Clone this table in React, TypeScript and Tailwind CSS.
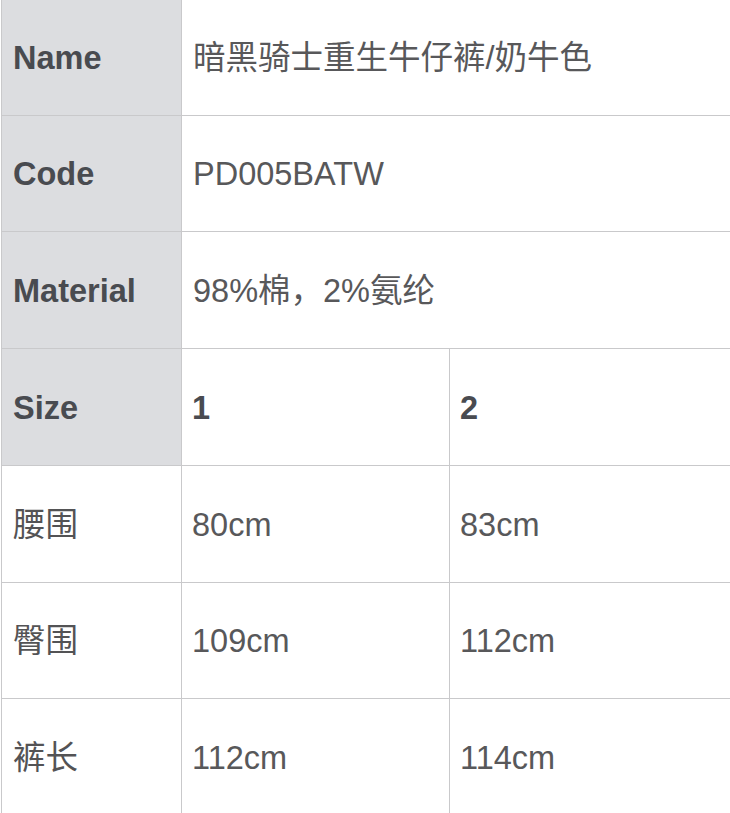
import React from "react";

const border = "border-[#c9c9cb]";

type Row = {
  label: string;
  labelGray: boolean;
  labelBold: boolean;
  cells: string[];
  bold?: boolean;
  h: string;
};

const rows: Row[] = [
  { label: "Name", labelGray: true, labelBold: true, cells: ["暗黑骑士重生牛仔裤/奶牛色"], h: "h-[116px]" },
  { label: "Code", labelGray: true, labelBold: true, cells: ["PD005BATW"], h: "h-[116px]" },
  { label: "Material", labelGray: true, labelBold: true, cells: ["98%棉，2%氨纶"], h: "h-[117px]" },
  { label: "Size", labelGray: true, labelBold: true, cells: ["1", "2"], bold: true, h: "h-[117px]" },
  { label: "腰围", labelGray: false, labelBold: false, cells: ["80cm", "83cm"], h: "h-[117px]" },
  { label: "臀围", labelGray: false, labelBold: false, cells: ["109cm", "112cm"], h: "h-[116px]" },
  { label: "裤长", labelGray: false, labelBold: false, cells: ["112cm", "114cm"], h: "h-[117px]" },
];

export default function App() {
  return (
    <div
      className="w-[730px] h-[813px] overflow-hidden bg-white"
      style={{ fontFamily: '"Liberation Sans", "Noto Sans CJK SC", sans-serif' }}
    >
      <div className={`ml-px border-l ${border} flex flex-col`}>
        {rows.map((r, i) => (
          <div
            key={i}
            className={`flex shrink-0 ${r.h} ${i < rows.length - 1 ? "border-b" : ""} ${border}`}
          >
            <div
              className={`w-[180px] shrink-0 flex items-center pl-[11px] pt-[2px] border-r ${border} ${
                r.labelGray ? "bg-[#dcdde0]" : "bg-white"
              } ${r.labelBold ? "font-bold text-[#494b50]" : "text-[#535355]"} text-[32.5px]`}
            >
              {r.label}
            </div>
            {r.cells.length === 1 ? (
              <div className="flex-1 flex items-center pl-[11px] pt-[2px] text-[32.5px] text-[#58585a]">
                {r.cells[0]}
              </div>
            ) : (
              <>
                <div
                  className={`w-[268px] shrink-0 flex items-center pl-[10px] pt-[2px] border-r ${border} text-[32.5px] ${
                    r.bold ? "font-bold text-[#494b50]" : "text-[#58585a]"
                  }`}
                >
                  {r.cells[0]}
                </div>
                <div
                  className={`flex-1 flex items-center pl-[10px] pt-[2px] text-[32.5px] ${
                    r.bold ? "font-bold text-[#494b50]" : "text-[#58585a]"
                  }`}
                >
                  {r.cells[1]}
                </div>
              </>
            )}
          </div>
        ))}
      </div>
    </div>
  );
}
